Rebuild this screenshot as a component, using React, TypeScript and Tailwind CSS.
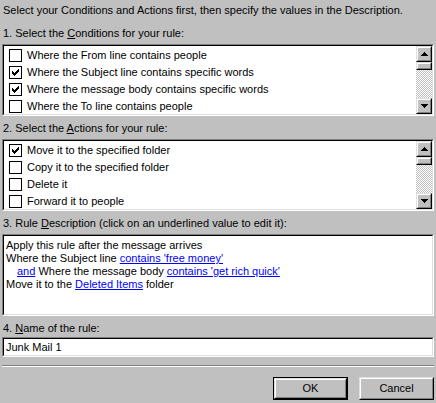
import type { ReactNode } from "react";

const font = "font-['Liberation_Sans',Arial,sans-serif]";

function Sunken({ className = "", children }: { className?: string; children: ReactNode }) {
  return (
    <div className={`border border-t-[#808080] border-l-[#808080] border-b-white border-r-white ${className}`}>
      <div className="h-full border border-t-black border-l-black border-b-[#dfdfdf] border-r-[#dfdfdf] bg-white">
        {children}
      </div>
    </div>
  );
}

function Raised({ className = "", children }: { className?: string; children?: ReactNode }) {
  return (
    <div className={`border border-t-[#dfdfdf] border-l-[#dfdfdf] border-b-black border-r-black bg-[#c0c0c0] ${className}`}>
      <div className="flex h-full w-full items-center justify-center border border-t-white border-l-white border-b-[#808080] border-r-[#808080]">
        {children}
      </div>
    </div>
  );
}

const checkPixels = [
  [6, 0],
  [5, 1], [6, 1],
  [0, 2], [4, 2], [5, 2], [6, 2],
  [0, 3], [1, 3], [3, 3], [4, 3], [5, 3],
  [0, 4], [1, 4], [2, 4], [3, 4], [4, 4],
  [1, 5], [2, 5], [3, 5],
  [2, 6],
];

function Checkbox({ checked }: { checked: boolean }) {
  return (
    <div className="flex h-[13px] w-[13px] shrink-0 items-center justify-center border border-black bg-white">
      {checked && (
        <svg width="7" height="7" viewBox="0 0 7 7" shapeRendering="crispEdges">
          {checkPixels.map(([x, y]) => (
            <rect key={`${x}-${y}`} x={x} y={y} width="1" height="1" fill="#000" />
          ))}
        </svg>
      )}
    </div>
  );
}

function Arrow({ up }: { up: boolean }) {
  return (
    <svg width="7" height="4" viewBox="0 0 7 4" shapeRendering="crispEdges">
      {up ? <polygon points="3.5 0 7 4 0 4" fill="#000" /> : <polygon points="0 0 7 0 3.5 4" fill="#000" />}
    </svg>
  );
}

function ScrollBar() {
  return (
    <div className="flex h-full w-4 shrink-0 flex-col">
      <Raised className="h-4 w-4">
        <Arrow up />
      </Raised>
      <Raised className="h-2 w-4" />
      <div className="flex-1 bg-[repeating-conic-gradient(#c0c0c0_0%_25%,#ffffff_0%_50%)] bg-[length:2px_2px]" />
      <Raised className="h-4 w-4">
        <Arrow up={false} />
      </Raised>
    </div>
  );
}

function CheckList({ items }: { items: { label: string; checked: boolean }[] }) {
  return (
    <Sunken className="mx-[2px] h-[72px]">
      <div className="flex h-full">
        <div className="flex-1 overflow-hidden pt-[1px]">
          {items.map((item) => (
            <div key={item.label} className="flex h-[17px] items-center gap-[5px] pl-[5px]">
              <Checkbox checked={item.checked} />
              <span>{item.label}</span>
            </div>
          ))}
        </div>
        <ScrollBar />
      </div>
    </Sunken>
  );
}

function Label({ children }: { children: ReactNode }) {
  return <div className="h-[13px] px-[3px] leading-[13px]">{children}</div>;
}

function Link({ children }: { children: ReactNode }) {
  return <span className="text-[#0000ff] underline">{children}</span>;
}

const conditions = [
  { label: "Where the From line contains people", checked: false },
  { label: "Where the Subject line contains specific words", checked: true },
  { label: "Where the message body contains specific words", checked: true },
  { label: "Where the To line contains people", checked: false },
];

const actions = [
  { label: "Move it to the specified folder", checked: true },
  { label: "Copy it to the specified folder", checked: false },
  { label: "Delete it", checked: false },
  { label: "Forward it to people", checked: false },
];

export default function App() {
  return (
    <div className={`h-[403px] w-[436px] overflow-hidden bg-[#c0c0c0] text-[11px] text-black ${font}`}>
      <div className="pt-[4px]">
        <Label>Select your Conditions and Actions first, then specify the values in the Description.</Label>
      </div>
      <div className="mt-[10px]">
        <Label>
          1. Select the <u>C</u>onditions for your rule:
        </Label>
      </div>
      <div className="mt-[4px]">
        <CheckList items={conditions} />
      </div>
      <div className="mt-[6px]">
        <Label>
          2. Select the <u>A</u>ctions for your rule:
        </Label>
      </div>
      <div className="mt-[4px]">
        <CheckList items={actions} />
      </div>
      <div className="mt-[6px]">
        <Label>
          3. Rule <u>D</u>escription (click on an underlined value to edit it):
        </Label>
      </div>
      <div className="mt-[4px]">
        <Sunken className="mx-[2px] h-[82px]">
          <div className="px-[2px] pt-[3px] leading-[13px]">
            <div>Apply this rule after the message arrives</div>
            <div>
              Where the Subject line <Link>contains 'free money'</Link>
            </div>
            <div className="pl-[11px]">
              <Link>and</Link> Where the message body <Link>contains 'get rich quick'</Link>
            </div>
            <div>
              Move it to the <Link>Deleted Items</Link> folder
            </div>
          </div>
        </Sunken>
      </div>
      <div className="mt-[6px]">
        <Label>
          4. <u>N</u>ame of the rule:
        </Label>
      </div>
      <div className="mt-[2px]">
        <Sunken className="mx-[2px] h-[20px]">
          <div className="flex h-full items-center px-[2px]">Junk Mail 1</div>
        </Sunken>
      </div>
      <div className="mx-[2px] mt-[8px] border-t border-b border-t-[#808080] border-b-white" />
      <div className="mt-[10px] flex justify-end gap-[11px] pr-[2px]">
        <div className="border border-black">
          <Raised className="h-[21px] w-[73px]">OK</Raised>
        </div>
        <Raised className="h-[23px] w-[75px]">Cancel</Raised>
      </div>
    </div>
  );
}
